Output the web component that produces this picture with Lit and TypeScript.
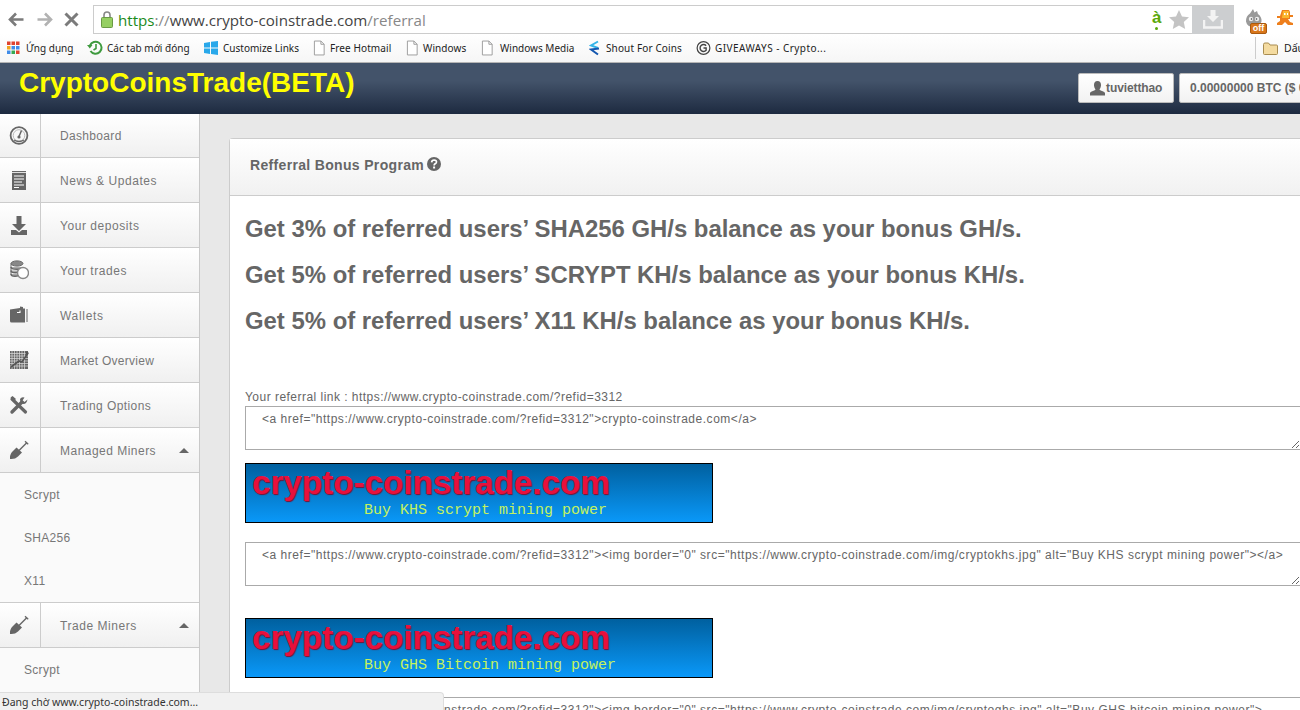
import { LitElement, html, css, svg } from "lit";
import { customElement } from "lit/decorators.js";

const icons: Record<string, unknown> = {
  gauge: svg`<circle cx="10" cy="10.500" r="8.400" fill="none" stroke="#666" stroke-width="1.800"/><circle cx="10" cy="10.500" r="5.800" fill="none" stroke="#aaa" stroke-width=".8"/><path d="M10 11.500 12.500 5.500" stroke="#666" stroke-width="1.500"/><circle cx="10" cy="12" r="1.600" fill="#666"/><path d="M5 15q5 3 10 0" fill="none" stroke="#666" stroke-width="1.400"/>`,
  news: svg`<path d="M3 2h14v19H3z" fill="#666"/><path d="M3 3.500h14" stroke="#fff" stroke-width=".8"/><path d="M5 7h10M5 10h10M5 13h8M5 16h10M5 18.500h5" stroke="#fff" stroke-width="1"/>`,
  down: svg`<path d="M7.500 2h5v8h4.500l-7 7-7-7h4.500z" fill="#666"/><path d="M2 16h5l3 2.500 3-2.500h5v5H2z" fill="#666"/>`,
  coins: svg`<ellipse cx="8" cy="4.500" rx="6" ry="2.600" fill="#888" stroke="#666"/><path d="M2 8c0 3 12 3 12 0M2 11.500c0 3 9 3 9 0M2 15c0 3 8 3 8 0" fill="#aaa" stroke="#666" stroke-width="1.500"/><path d="M2 4.500v11" stroke="#666"/><circle cx="14" cy="14" r="5.500" fill="#fff" stroke="#888" stroke-width="1.400"/>`,
  wallet: svg`<path d="M1 5.500 11 4V2.500l3 .5v1.500h2v14H2.500q-1.500 0-1.500-1.500z" fill="#666"/><path d="M18 5v13" stroke="#666" stroke-width="1"/><path d="M8 8.500h3V6.500" fill="none" stroke="#fff" stroke-width="1.100"/>`,
  market: svg`<path d="M1 2h18v18H1z" fill="#666"/><path d="M3 2v18M5.500 2v18M8 2v18M10.500 2v18M13 2v18M15.500 2v18M1 4.500h18M1 7h18M1 9.500h18M1 12h18M1 14.500h18M1 17h18" stroke="#ddd" stroke-width=".7"/><path d="M2 18 10 12l3 1 6-9" stroke="#555" stroke-width="1.600" fill="none"/><circle cx="18" cy="4" r="1.500" fill="#555"/>`,
  tools: svg`<path d="M3 5l13.500 13" stroke="#666" stroke-width="3.200" stroke-linecap="round"/><path d="M1.500 3.500 3.500 2 7 5 5 7z" fill="#666"/><path d="M3 18 13 8" stroke="#666" stroke-width="3.400" stroke-linecap="round"/><path d="M18.500 5.500 15.500 8 13.500 6.500 15.500 3.500Q12.500 2.500 11 5L11.500 9 14.500 10Q17.500 10 18.500 5.500z" fill="#666"/>`,
  shovel: svg`<path d="M10 11.500 18 3.500" stroke="#666" stroke-width="1.500"/><path d="M16 2.200l3.200 3" stroke="#666" stroke-width="1.300"/><path d="M7.500 8.500 13 13.500 9 17.500Q6 20.500 1 20 .5 15.500 3.500 12.500z" fill="#666"/>`,
};

const menu = [
  { icon: "gauge", label: "Dashboard", ls: 0.33 },
  { icon: "news", label: "News & Updates", ls: 0.55 },
  { icon: "down", label: "Your deposits", ls: 0.55 },
  { icon: "coins", label: "Your trades", ls: 0.55 },
  { icon: "wallet", label: "Wallets", ls: 0.7 },
  { icon: "market", label: "Market Overview", ls: 0.28 },
  { icon: "tools", label: "Trading Options", ls: 0.42 },
  { icon: "shovel", label: "Managed Miners", ls: 0.48, open: true, subs: ["Scrypt", "SHA256", "X11"] },
  { icon: "shovel", label: "Trade Miners", ls: 0.55, open: true, subs: ["Scrypt"], sep: true },
];

const doc = svg`<path d="M1.500 .5h7l3.500 3.500v11.500H1.500z" fill="#fff" stroke="#999"/><path d="M8.500 .5v3.500H12" fill="none" stroke="#999"/>`;

const marks = [
  { box: 80, w: 15, g: 4, ls: 0, label: "Ứng dụng", svg: svg`<g><path fill="#e0432f" d="M0 0h3.500v3.500H0zM4.500 0H8v3.500H4.500zM9 0h3.500v3.500H9z"/><path fill="#f2a51f" d="M0 4.500h3.500V8H0z"/><path fill="#3f8be8" d="M4.500 4.500H8V8H4.500zM9 4.500h3.500V8H9z"/><path fill="#3f8be8" d="M0 9h3.500v3.500H0z"/><path fill="#36a852" d="M4.500 9H8v3.500H4.500z"/><path fill="#e0432f" d="M9 9h3.500v3.500H9z"/></g>`, vb: "0 -1.500 15 16" },
  { box: 116, w: 16, g: 4, ls: 0, label: "Các tab mới đóng", svg: svg`<path d="M3 5.500A6 6 0 1 1 3.500 11" fill="none" stroke="#3e9a3e" stroke-width="2"/><path d="M0 5l5.500 0-2.700 3.500z" fill="#3e9a3e"/><path d="M9 4v4.500l-2.500 1.500" fill="none" stroke="#3e9a3e" stroke-width="1.600"/>`, vb: "0 0 16 16" },
  { box: 110, w: 16, g: 4, ls: 0, label: "Customize Links", svg: svg`<path fill="#29a8ea" d="M1 3l6-1v5.500H1zM8 1.800 15 1v6.500H8zM1 8.500h6V14l-6-1zM8 8.500h7V15l-7-1z"/>`, vb: "0 0 16 16" },
  { box: 93, w: 13, g: 4, ls: 0.1, label: "Free Hotmail", svg: doc, vb: "0 0 14 16" },
  { box: 75, w: 13, g: 4, ls: 0.1, label: "Windows", svg: doc, vb: "0 0 14 16" },
  { box: 108, w: 13, g: 6, ls: 0, label: "Windows Media", svg: doc, vb: "0 0 14 16" },
  { box: 107, w: 11, g: 6, ls: 0.13, label: "Shout For Coins", svg: svg`<path d="M9 1 2 5l7 2.500" fill="none" stroke="#35b5e8" stroke-width="2"/><path d="M10 8 2 9l7 5" fill="none" stroke="#1558b0" stroke-width="2"/>`, vb: "0 0 11 15" },
  { box: 200, w: 15, g: 4, ls: 0.45, label: "GIVEAWAYS - Crypto...", svg: svg`<circle cx="8" cy="8" r="6.800" fill="none" stroke="#444" stroke-width="1.300"/><path d="M10.800 5.500A3.700 3.700 0 1 0 10.800 10.500V8H8" fill="none" stroke="#444" stroke-width="1.500"/>`, vb: "0 0 16 16" },
];

const code = (src: string) => `<a href="https://www.crypto-coinstrade.com/?refid=3312">${src}</a>`;

@customElement("app-root")
export class AppRoot extends LitElement {
  static styles = css`
    :host { display: block; width: 1300px; height: 710px; }
    .page { position: relative; width: 1300px; height: 710px; overflow: hidden; display: flex; flex-direction: column; background: #e8e8e8; font-family: "Liberation Sans", Arial, sans-serif; }
    svg { display: block; flex: none; }

    .toolbar { height: 34px; flex: none; background: #fff; display: flex; align-items: flex-start; }
    .nav { width: 93px; display: flex; flex: none; padding: 12px 0 0 8px; gap: 11px; box-sizing: border-box; }
    .url { width: 1141px; height: 29px; margin-top: 5px; flex: none; box-sizing: border-box; border: 1px solid #ccc; border-width: 1px 0 1px 1px; display: flex; align-items: center; font: 15.150px "Open Sans", sans-serif; color: #444; padding-left: 7px; }
    .url .lock { margin-right: 5px; }
    .url b { font-weight: 400; color: #1b8a1b; }
    .url i { font-style: normal; color: #888; }
    .url .grow { flex: 1; white-space: nowrap; }
    .ah { position: relative; color: #5aa80a; font: bold 17px/20px "Liberation Sans", sans-serif; width: 18px; margin-top: -4px; padding-left: 1px; box-sizing: border-box; }
    .ah::after { content: ""; position: absolute; left: 4px; top: 19px; width: 3px; height: 3px; border-radius: 50%; background: #5aa80a; }
    .star { margin-right: 3px; }
    .dl { width: 42px; height: 28px; background: #ccced0; display: flex; align-items: center; justify-content: center; }
    .ext { display: flex; margin-left: 11px; gap: 10px; padding-top: 9px; }
    .gnome { position: relative; width: 22px; height: 25px; }
    .off { position: absolute; left: 5px; top: 14px; width: 17px; height: 11px; box-sizing: border-box; border: 1px solid #a85a10; background: #d9761a; color: #fff; font: bold 9px/9px "Liberation Sans", sans-serif; text-align: center; border-radius: 2px; }

    .marks { height: 29px; flex: none; box-sizing: border-box; border-bottom: 1px solid #b5b5b5; background: linear-gradient(#fff, #f6f6f6); display: flex; align-items: center; font: 10px "Noto Sans", sans-serif; color: #222; padding-left: 7px; overflow: hidden; }
    .mlist { width: 1248px; flex: none; display: flex; align-items: center; }
    .mark { display: flex; align-items: center; white-space: nowrap; flex: none; }
    .mright { flex: none; display: flex; align-items: center; gap: 6px; height: 22px; border-left: 1px solid #ccc; padding-left: 7px; white-space: nowrap; font-size: 10.500px; }

    .top { height: 51px; flex: none; display: flex; background: linear-gradient(#43536a 0, #43536a 35%, #1d2a40 100%); overflow: hidden; }
    .brand { flex: none; width: 1059px; padding: 3px 0 0 19px; color: #ff0; font: bold 28px/33px "Liberation Sans", sans-serif; white-space: nowrap; }
    .tb { flex: none; margin-top: 10px; height: 30px; box-sizing: border-box; border: 1px solid #bbb; border-radius: 2px; background: linear-gradient(#fff, #f2f2f2); font: bold 12px/28px "Liberation Sans", sans-serif; color: #666; display: flex; align-items: center; white-space: nowrap; }
    .user { width: 96px; padding-left: 11px; gap: 1px; margin-right: 5px; letter-spacing: -.1px; }
    .bal { padding: 0 10px; }

    .body { flex: 1; min-height: 0; display: flex; }
    .side { width: 200px; flex: none; box-sizing: border-box; border-right: 1px solid #c9c9c9; background: #fafafa; }
    .item { height: 45px; box-sizing: border-box; border-bottom: 1px solid #ccc; display: flex; background: linear-gradient(#fff, #f0f0f0); color: #777; font-size: 12px; }
    .item.first { height: 44px; }
    .item.sep { height: 46px; border-top: 1px solid #ccc; }
    .ic { width: 41px; flex: none; box-sizing: border-box; border-right: 1px solid #ccc; display: flex; align-items: center; justify-content: center; padding-right: 3px; }
    .lb { flex: 1; padding: 1px 0 0 19px; display: flex; align-items: center; white-space: nowrap; }
    .first .lb { padding-top: 0; }
    .caret { margin-left: auto; margin-right: 10px; width: 0; height: 0; border: 5px solid transparent; border-top-width: 0; border-bottom: 5px solid #666; }
    .sub { height: 43px; display: flex; align-items: center; padding-left: 24px; color: #777; font-size: 12px; letter-spacing: .3px; box-sizing: border-box; }

    .main { flex: 1; min-width: 0; padding: 24px 0 0 29px; overflow: hidden; }
    .card { width: 1100px; box-sizing: border-box; background: #fff; border: 1px solid #ccc; border-right: 0; border-radius: 4px 0 0 0; }
    .chead { height: 57px; box-sizing: border-box; border-bottom: 1px solid #ccc; background: linear-gradient(#fff, #f1f1f1); display: flex; align-items: center; gap: 3px; padding: 0 0 4px 20px; font: bold 14px "Liberation Sans", sans-serif; color: #666; letter-spacing: .33px; }
    .chead svg { margin-top: -2px; }
    .cbody { padding: 20px 0 40px 15px; color: #666; }
    .hl { margin: 0 0 20px; font: bold 23.900px/26px "Liberation Sans", sans-serif; color: #666; white-space: nowrap; }
    .ref { margin: 56px 0 2px; font-size: 12px; line-height: 14px; letter-spacing: .47px; color: #666; }
    textarea { display: block; width: 1056px; height: 44px; box-sizing: border-box; border: 1px solid #aaa; padding: 5px 16px; margin: 0; font: 12px/15px "Liberation Sans", sans-serif; letter-spacing: .53px; color: #666; background: #fff; outline: 0; }
    .ban { width: 468px; height: 60px; box-sizing: border-box; border: 1px solid #000; background: linear-gradient(#00609f, #0a98f8); overflow: hidden; padding-left: 6px; }
    .ban .big { font: bold 33.200px/38px "Liberation Sans", sans-serif; color: #e8103c; text-shadow: 1px 1px 1px #7a1030; white-space: nowrap; }
    .ban .small { margin: 0 0 0 112px; font: 15px/17px "Liberation Mono", monospace; color: #c4f25e; white-space: nowrap; }
    .m13 { margin-top: 13px; } .m19 { margin-top: 19px; } .m32 { margin-top: 32px; }

    .status { position: absolute; left: 0; bottom: 0; width: 444px; height: 18px; box-sizing: border-box; background: #f1f1f1; border-top: 1px solid #ddd; border-right: 1px solid #ddd; border-radius: 0 4px 0 0; padding: 2px 0 0 2px; font: 10.500px/14px "Noto Sans", sans-serif; color: #333; white-space: nowrap; }
  `;

  render() {
    return html`<div class="page">
      <div class="toolbar">
        <div class="nav">
          <svg width="17" height="15" viewBox="0 0 17 15"><path d="M15.500 7.500H3M8 1.500 2 7.500l6 6" fill="none" stroke="#7b7b7b" stroke-width="2.600"/></svg>
          <svg width="17" height="15" viewBox="0 0 17 15"><path d="M1.500 7.500H14M9 1.500l6 6-6 6" fill="none" stroke="#b2b2b2" stroke-width="2.600"/></svg>
          <svg width="15" height="15" viewBox="0 0 15 15"><path d="M1.500 1.500l12 12M13.500 1.500l-12 12" stroke="#7b7b7b" stroke-width="3"/></svg>
        </div>
        <div class="url">
          <svg class="lock" width="12" height="17" viewBox="0 0 12 17"><path d="M3 7V4a3 3 0 0 1 6 0v3" fill="none" stroke="#888" stroke-width="1.600"/><rect x=".5" y="6.500" width="11" height="10" rx="1" fill="#95cf62" stroke="#6a9a45"/></svg>
          <span class="grow"><b>https</b><i>://</i>www.crypto-coinstrade.com<i>/referral</i></span>
          <span class="ah">à</span>
          <svg class="star" width="20" height="19" viewBox="0 0 20 19"><path d="M10 0l3 6.500 7 .8-5.200 4.700 1.400 7L10 15.500 3.800 19l1.400-7L0 7.300l7-.8z" fill="#c4c4c4"/></svg>
          <div class="dl"><svg width="20" height="19" viewBox="0 0 20 19"><path d="M7.500 0h5v6H16l-6 6-6-6h3.500z" fill="#f3f3f3"/><path d="M1 10v7.500h18V10" fill="none" stroke="#f3f3f3" stroke-width="2.500"/></svg></div>
        </div>
        <div class="ext">
          <div class="gnome">
            <svg width="18" height="19" viewBox="0 0 18 19"><path d="M8 0l1.500 3.500L12 2l1 3q4 3 3.500 7.500Q15 18 9 18 2 18 1 12.500 .8 7 5 4.500z" fill="#9a9a9a"/><circle cx="6" cy="10" r="2.200" fill="#eee"/><circle cx="12" cy="10" r="2.200" fill="#eee"/><circle cx="6.500" cy="10" r=".8" fill="#444"/><circle cx="11.500" cy="10" r=".8" fill="#444"/></svg>
            <div class="off">off</div>
          </div>
          <svg width="16" height="18" viewBox="0 0 16 18"><path d="M5 1h7l1 2v3h3v2h-3v2h-2l2 3 3 1v2h-5l-3-3-3 3H0v-2l3-2V9H0V7h3z" fill="#ee7f1c"/><path d="M6 2h6v7H5z" fill="#fbb62e"/><path d="M7 4h1.500v2H7zM10 4h1v2h-1z" fill="#fff"/></svg>
        </div>
      </div>

      <div class="marks">
        <div class="mlist">
          ${marks.map((m) => html`<div class="mark" style="gap:${m.g}px;width:${m.box}px;letter-spacing:${m.ls}px"><svg width=${m.w} height="16" viewBox=${m.vb}>${m.svg}</svg><span>${m.label}</span></div>`)}
        </div>
        <div class="mright">
          <svg width="15" height="13" viewBox="0 0 15 13"><path d="M.5 2.500q0-1.500 1.500-1.500h3.500l1.500 2h6.500q1 0 1 1v7.500q0 1-1 1h-12q-1 0-1-1z" fill="#f4dba0" stroke="#a88c50"/></svg>
          <span>Dấu trang</span>
        </div>
      </div>

      <div class="top">
        <div class="brand">CryptoCoinsTrade(BETA)</div>
        <div class="tb user"><svg width="15" height="15" viewBox="0 0 15 15"><path d="M7.500 0c2.500 0 3.700 2 3.500 4.500-.2 2-1 3.200-1.500 4 0 1 4.500 1.500 5.500 3.500v2.500H0V12c1-2 5.500-2.500 5.500-3.500-.5-.8-1.300-2-1.500-4C3.800 2 5 0 7.500 0z" fill="#666"/></svg>tuvietthao</div>
        <div class="tb bal">0.00000000 BTC ($ 0.00)</div>
      </div>

      <div class="body">
        <nav class="side">
          ${menu.map((m, i) => html`
            <div class="item ${i === 0 ? "first" : ""} ${m.sep ? "sep" : ""}">
              <div class="ic"><svg width="20" height="22" viewBox="0 0 20 22">${icons[m.icon]}</svg></div>
              <div class="lb" style="letter-spacing:${m.ls}px">${m.label}${m.open ? html`<span class="caret"></span>` : ""}</div>
            </div>
            ${(m.subs ?? []).map((s) => html`<div class="sub">${s}</div>`)}
          `)}
        </nav>
        <main class="main">
          <section class="card">
            <header class="chead">
              Refferral Bonus Program
              <svg width="14" height="14" viewBox="0 0 14 14"><circle cx="7" cy="7" r="7" fill="#666"/><path d="M4.600 5.400Q4.800 3 7.100 3 9.500 3.100 9.500 5 9.400 6.300 8 6.900 7.100 7.300 7.100 8.400" fill="none" stroke="#fff" stroke-width="1.700"/><rect x="6.100" y="9.500" width="2" height="2" fill="#fff"/></svg>
            </header>
            <div class="cbody">
              <p class="hl">Get 3% of referred users’ SHA256 GH/s balance as your bonus GH/s.</p>
              <p class="hl">Get 5% of referred users’ SCRYPT KH/s balance as your bonus KH/s.</p>
              <p class="hl">Get 5% of referred users’ X11 KH/s balance as your bonus KH/s.</p>
              <div class="ref">Your referral link : https://www.crypto-coinstrade.com/?refid=3312</div>
              <textarea .value=${code("crypto-coinstrade.com")}></textarea>
              <div class="ban m13"><div class="big">crypto-coinstrade.com</div><div class="small">Buy KHS scrypt mining power</div></div>
              <textarea class="m19" .value=${code('<img border="0" src="https://www.crypto-coinstrade.com/img/cryptokhs.jpg" alt="Buy KHS scrypt mining power">')}></textarea>
              <div class="ban m32"><div class="big">crypto-coinstrade.com</div><div class="small">Buy GHS Bitcoin mining power</div></div>
              <textarea class="m19" .value=${code('<img border="0" src="https://www.crypto-coinstrade.com/img/cryptoghs.jpg" alt="Buy GHS bitcoin mining power">')}></textarea>
            </div>
          </section>
        </main>
      </div>
      <div class="status">Đang chờ www.crypto-coinstrade.com...</div>
    </div>`;
  }
}
